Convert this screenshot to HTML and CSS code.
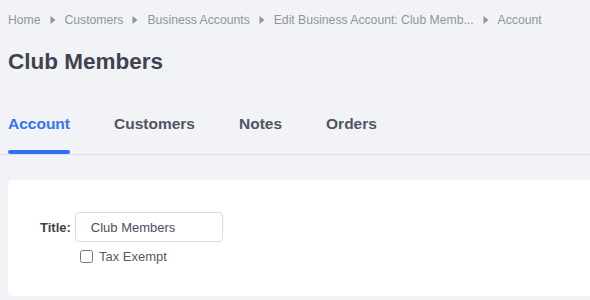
FILE: index.html
```html
<!DOCTYPE html>
<html lang="en">
<head>
    <meta charset="UTF-8">
    <meta name="viewport" content="width=device-width, initial-scale=1.0">
    <title>Club Members</title>
    <link rel="stylesheet" href="styles.css">
</head>
<body>
    <div class="page">
        <nav class="breadcrumb">
            <a href="#">Home</a>
            <svg class="sep" viewBox="0 0 6 8" width="6" height="8"><path d="M0.5 0 L5.5 4 L0.5 8 Z" /></svg>
            <a href="#">Customers</a>
            <svg class="sep" viewBox="0 0 6 8" width="6" height="8"><path d="M0.5 0 L5.5 4 L0.5 8 Z" /></svg>
            <a href="#">Business Accounts</a>
            <svg class="sep" viewBox="0 0 6 8" width="6" height="8"><path d="M0.5 0 L5.5 4 L0.5 8 Z" /></svg>
            <a href="#">Edit Business Account: Club Memb...</a>
            <svg class="sep" viewBox="0 0 6 8" width="6" height="8"><path d="M0.5 0 L5.5 4 L0.5 8 Z" /></svg>
            <span>Account</span>
        </nav>

        <h1 class="page-title">Club Members</h1>

        <ul class="tabs">
            <li class="tab active">Account</li>
            <li class="tab">Customers</li>
            <li class="tab">Notes</li>
            <li class="tab">Orders</li>
        </ul>

        <div class="card">
            <div class="form-row">
                <label for="title">Title:</label>
                <input type="text" id="title" value="Club Members" />
            </div>
            <label class="check">
                <input type="checkbox" />
                <span>Tax Exempt</span>
            </label>
        </div>
    </div>
</body>
</html>
```

FILE: styles.css
```css
html, body {
    overflow: hidden;
}
body {
    margin: 0;
    background-color: #f2f3f7;
    font-family: "Liberation Sans", Arial, sans-serif;
    color: #3d4250;
}
.page {
    width: 640px;
    padding: 0 0 0 8px;
}
.breadcrumb {
    display: flex;
    align-items: center;
    gap: 9px;
    height: 40px;
    font-size: 12.2px;
    color: #8e94a0;
}
.breadcrumb a {
    color: #8e94a0;
    text-decoration: none;
}
.breadcrumb .sep {
    fill: #8e94a0;
}
.page-title {
    margin: 7px 0 0;
    font-size: 22.5px;
    font-weight: bold;
    line-height: 30px;
    color: #3e4350;
}
.tabs {
    display: flex;
    gap: 44px;
    margin: 33px 0 0 -8px;
    padding: 0 0 0 8px;
    list-style: none;
    border-bottom: 1px solid #dfe1e7;
}
.tab {
    position: relative;
    padding: 5px 0 21px;
    font-size: 15.5px;
    font-weight: bold;
    color: #505562;
}
.tab.active {
    color: #3374f6;
}
.tab.active::after {
    content: "";
    position: absolute;
    left: 0;
    right: 0;
    bottom: 0;
    height: 4px;
    border-radius: 2px;
    background-color: #2f6ef5;
}
.card {
    margin-top: 25px;
    height: 116px;
    padding: 32px 0 0 32px;
    box-sizing: border-box;
    background-color: #ffffff;
    border-radius: 5px;
}
.form-row {
    display: flex;
    align-items: center;
    gap: 4px;
}
.form-row label {
    font-size: 13px;
    font-weight: bold;
    color: #3d4250;
}
.form-row input {
    width: 148px;
    height: 30px;
    box-sizing: border-box;
    padding: 0 15px;
    border: 1px solid #d9dbe1;
    border-radius: 4px;
    font-family: "Liberation Sans", Arial, sans-serif;
    font-size: 13px;
    color: #4a5060;
}
.check {
    display: flex;
    align-items: center;
    gap: 6px;
    margin: 7px 0 0 40px;
    font-size: 13px;
    color: #555b67;
}
.check input {
    width: 13px;
    height: 13px;
    margin: 0;
}
```
